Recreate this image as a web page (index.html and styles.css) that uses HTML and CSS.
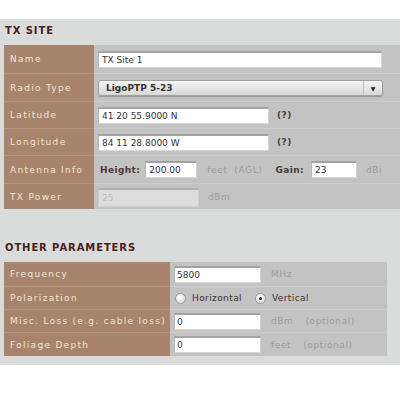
FILE: index.html
```html
<!DOCTYPE html>
<html>
<head>
<meta charset="utf-8">
<link rel="stylesheet" href="styles.css">
</head>
<body>
<div class="panel">
  <h2 class="heading">TX SITE</h2>
  <div class="form form-tx">
    <div class="label">Name</div>
    <div class="field"><input class="inp inp-name" value="TX Site 1"></div>

    <div class="label">Radio Type</div>
    <div class="field">
      <div class="select"><span class="select-text">LigoPTP 5-23</span><span class="select-arrow">▼</span></div>
    </div>

    <div class="label">Latitude</div>
    <div class="field"><input class="inp inp-coord" value="41 20 55.9000 N"><span class="help">(?)</span></div>

    <div class="label">Longitude</div>
    <div class="field"><input class="inp inp-coord" value="84 11 28.8000 W"><span class="help">(?)</span></div>

    <div class="label">Antenna Info</div>
    <div class="field">
      <span class="sub sub-height">Height:</span><input class="inp inp-height" value="200.00"><span class="unit unit-agl">feet&nbsp; (AGL)</span>
      <span class="sub sub-gain">Gain:</span><input class="inp inp-gain" value="23"><span class="unit unit-dbi">dBi</span>
    </div>

    <div class="label">TX Power</div>
    <div class="field"><input class="inp inp-power" value="25" disabled><span class="unit unit-dbm">dBm</span></div>
  </div>

  <h2 class="heading heading-other">OTHER PARAMETERS</h2>
  <div class="form form-other">
    <div class="label">Frequency</div>
    <div class="field"><input class="inp inp-small" value="5800"><span class="unit">MHz</span></div>

    <div class="label">Polarization</div>
    <div class="field">
      <span class="radio"></span><span class="radio-label">Horizontal</span>
      <span class="radio radio-on"></span><span class="radio-label">Vertical</span>
    </div>

    <div class="label">Misc. Loss (e.g. cable loss)</div>
    <div class="field"><input class="inp inp-small" value="0"><span class="unit">dBm</span><span class="unit opt">(optional)</span></div>

    <div class="label">Foliage Depth</div>
    <div class="field"><input class="inp inp-small" value="0"><span class="unit">feet</span><span class="unit opt opt-feet">(optional)</span></div>
  </div>
</div>
</body>
</html>
```

FILE: styles.css
```css
html, body {
  margin: 0;
  padding: 0;
  background: #ffffff;
  font-family: "DejaVu Sans", Verdana, sans-serif;
  font-size: 9px;
}

.panel {
  margin-top: 19px;
  background: #d9dcda;
  padding: 5px 0 8px 0;
  height: 346px;
  box-sizing: border-box;
}

.heading {
  margin: 0 0 0 5px;
  font-size: 10px;
  font-weight: bold;
  letter-spacing: 0.9px;
  color: #4b1d1d;
  height: 21px;
  line-height: 13px;
}

.heading-other {
  margin-top: 32px;
  height: 21px;
  line-height: 13px;
}

.form {
  display: grid;
  margin-left: 4px;
}

.form-tx {
  width: 396px;
  grid-template-columns: 90px 1fr;
  grid-template-rows: 28px 28px 27px 27px 28px 26px;
}

.form-other {
  width: 383px;
  grid-template-columns: 166px 1fr;
  grid-template-rows: 24px 23px 23px 24px;
}

.label {
  background: #a8846c;
  color: #f1e4da;
  letter-spacing: 1.3px;
  padding-left: 6px;
  display: flex;
  align-items: center;
  border-top: 1px solid #b3917c;
  white-space: nowrap;
}

.field {
  background: #c3c3c3;
  display: flex;
  align-items: center;
  padding-left: 4px;
  border-top: 1px solid #cdcdcd;
}

.form > .label:first-child,
.form > .label:first-child + .field {
  border-top: none;
}

.inp {
  font-family: "DejaVu Sans", Verdana, sans-serif;
  font-size: 9px;
  color: #333333;
  background: #ffffff;
  border: 1px solid #d6d6d6;
  border-top: 2px solid #a2a2a2;
  border-left: 1px solid #b5b5b5;
  height: 17px;
  box-sizing: border-box;
  padding: 0 0 0 3px;
  margin: 0;
  outline: none;
}

.inp-name { width: 284px; }
.inp-coord { width: 171px; }
.inp-height { width: 52px; }
.inp-gain { width: 46px; }
.inp-small { width: 87px; padding-left: 2px; }

.inp-power {
  width: 101px;
  height: 19px;
  background: #dcdcdc;
  color: #b9b9b9;
  border: 1px solid #cfcfcf;
  border-top: 2px solid #b0b0b0;
  margin-top: 2px;
}

.select {
  width: 285px;
  height: 16px;
  box-sizing: border-box;
  border: 1px solid #a0a0a0;
  border-radius: 3px;
  background: linear-gradient(#f5f5f5, #d8d8d8);
  box-shadow: 0 1px 1px rgba(0,0,0,0.25);
  display: flex;
  align-items: center;
  margin-top: 1px;
}

.select-text {
  flex: 1;
  font-weight: bold;
  color: #333333;
  padding-left: 7px;
}

.select-arrow {
  width: 18px;
  height: 100%;
  border-left: 1px solid #c0c0c0;
  font-size: 6px;
  color: #222222;
  display: flex;
  align-items: center;
  justify-content: center;
}

.help {
  font-weight: bold;
  color: #4a4040;
  margin-left: 8px;
  letter-spacing: 0.5px;
}

.sub {
  font-weight: bold;
  color: #4a3a3a;
  letter-spacing: 0.4px;
}

.sub-height { margin-left: 2px; margin-right: 5px; }
.sub-gain { margin-right: 7px; }

.unit {
  color: #9c9c9c;
  letter-spacing: 0.6px;
  margin-left: 10px;
  white-space: nowrap;
}

.unit-agl { margin-left: 10px; margin-right: 13px; }
.unit-dbi { margin-left: 9px; }
.unit-dbm { margin-left: 9px; }

.opt { margin-left: 12px; }
.opt-feet { margin-left: 12px; }

.radio {
  width: 11px;
  height: 11px;
  box-sizing: border-box;
  border-radius: 50%;
  border: 1px solid #9a9a9a;
  background: radial-gradient(circle at 40% 35%, #ffffff, #d0d0d0);
  margin-left: 1px;
  margin-right: 6px;
  position: relative;
}

.radio-on::after {
  content: "";
  position: absolute;
  left: 3px;
  top: 3px;
  width: 3px;
  height: 3px;
  border-radius: 50%;
  background: #222222;
}

.radio-label {
  color: #3d2f2f;
  margin-right: 12px;
  letter-spacing: 0.4px;
}
```
